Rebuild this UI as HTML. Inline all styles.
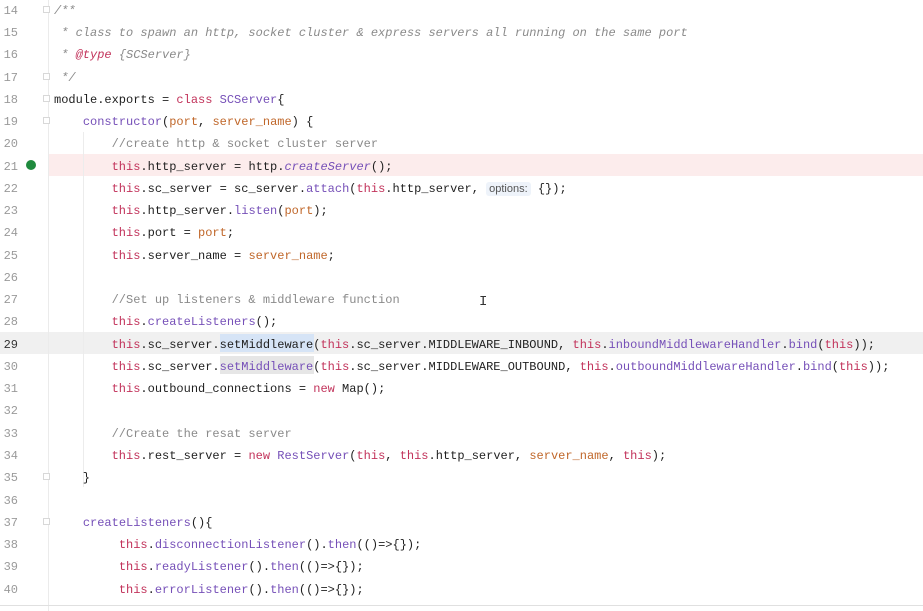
<!DOCTYPE html>
<html><head><meta charset="utf-8"><style>
body{margin:0;width:923px;height:611px;background:#fff;overflow:hidden;position:relative;font-family:"Liberation Mono",monospace;font-size:12px;}
.ln{position:absolute;left:0;width:18px;text-align:right;color:#9a9a9a;margin-top:2px;}
.c{position:absolute;left:54px;white-space:pre;color:#1f1f1f;margin-top:2px;}
.k{color:#c2335b}.f{color:#7650b8}.p{color:#c0672a}.cm{color:#8a8a8a}.ci{color:#8a8a8a;font-style:italic}.t{color:#c2335b;font-style:italic}
.hint{font-family:"Liberation Sans",sans-serif;font-size:11px;color:#555;background:#eef3fa;border-radius:3px;padding:1px 3px;}
.fold{position:absolute;left:43px;width:7px;height:7px;border:1px solid #d8d8d8;background:#fff;box-sizing:border-box}
</style></head><body>
<div style="position:absolute;left:48px;top:154px;width:875px;height:22px;background:#fcecec"></div>
<div style="position:absolute;left:0;top:332px;width:923px;height:22px;background:#f0f0f0"></div>
<div style="position:absolute;left:48px;top:0;width:1px;height:611px;background:#ebebeb"></div>
<div style="position:absolute;left:83px;top:132px;width:1px;height:355px;background:#ececec"></div>
<div style="position:absolute;left:0;top:605px;width:923px;height:1px;background:#e0e0e0"></div>
<div class="fold" style="top:6px"></div>
<div class="fold" style="top:73px"></div>
<div class="fold" style="top:95px"></div>
<div class="fold" style="top:117px"></div>
<div class="fold" style="top:473px"></div>
<div class="fold" style="top:518px"></div>
<div style="position:absolute;left:26px;top:160px;width:10px;height:10px;border-radius:50%;background:#1f8a3e"></div>
<div style="position:absolute;left:220px;top:334px;width:94px;height:18px;background:#d6e4f6"></div>
<div style="position:absolute;left:220px;top:356px;width:94px;height:18px;background:#e6e6e6"></div>
<div style="position:absolute;left:479px;top:294px;color:#333;font-size:14px">I</div>
<div class="ln" style="top:2px">14</div><div class="c ci" style="top:2px">/**</div>
<div class="ln" style="top:24px">15</div><div class="c ci" style="top:24px"> * class to spawn an http, socket cluster &amp; express servers all running on the same port</div>
<div class="ln" style="top:46px">16</div><div class="c ci" style="top:46px"> * <span class="t">@type</span> {SCServer}</div>
<div class="ln" style="top:69px">17</div><div class="c ci" style="top:69px"> */</div>
<div class="ln" style="top:91px">18</div><div class="c" style="top:91px">module.exports = <span class="k">class</span> <span class="f">SCServer</span>{</div>
<div class="ln" style="top:113px">19</div><div class="c" style="top:113px">    <span class="f">constructor</span>(<span class="p">port</span>, <span class="p">server_name</span>) {</div>
<div class="ln" style="top:135px">20</div><div class="c cm" style="top:135px">        //create http &amp; socket cluster server</div>
<div class="ln" style="top:158px">21</div><div class="c" style="top:158px">        <span class="k">this</span>.http_server = http.<span class="f" style="font-style:italic">createServer</span>();</div>
<div class="ln" style="top:180px">22</div><div class="c" style="top:180px">        <span class="k">this</span>.sc_server = sc_server.<span class="f">attach</span>(<span class="k">this</span>.http_server, <span class="hint">options:</span> {});</div>
<div class="ln" style="top:202px">23</div><div class="c" style="top:202px">        <span class="k">this</span>.http_server.<span class="f">listen</span>(<span class="p">port</span>);</div>
<div class="ln" style="top:224px">24</div><div class="c" style="top:224px">        <span class="k">this</span>.port = <span class="p">port</span>;</div>
<div class="ln" style="top:247px">25</div><div class="c" style="top:247px">        <span class="k">this</span>.server_name = <span class="p">server_name</span>;</div>
<div class="ln" style="top:269px">26</div>
<div class="ln" style="top:291px">27</div><div class="c cm" style="top:291px">        //Set up listeners &amp; middleware function</div>
<div class="ln" style="top:313px">28</div><div class="c" style="top:313px">        <span class="k">this</span>.<span class="f">createListeners</span>();</div>
<div class="ln" style="top:336px;color:#333">29</div><div class="c" style="top:336px">        <span class="k">this</span>.sc_server.setMiddleware(<span class="k">this</span>.sc_server.MIDDLEWARE_INBOUND, <span class="k">this</span>.<span class="f">inboundMiddlewareHandler</span>.<span class="f">bind</span>(<span class="k">this</span>));</div>
<div class="ln" style="top:358px">30</div><div class="c" style="top:358px">        <span class="k">this</span>.sc_server.<span class="f">setMiddleware</span>(<span class="k">this</span>.sc_server.MIDDLEWARE_OUTBOUND, <span class="k">this</span>.<span class="f">outboundMiddlewareHandler</span>.<span class="f">bind</span>(<span class="k">this</span>));</div>
<div class="ln" style="top:380px">31</div><div class="c" style="top:380px">        <span class="k">this</span>.outbound_connections = <span class="k">new</span> Map();</div>
<div class="ln" style="top:402px">32</div>
<div class="ln" style="top:425px">33</div><div class="c cm" style="top:425px">        //Create the resat server</div>
<div class="ln" style="top:447px">34</div><div class="c" style="top:447px">        <span class="k">this</span>.rest_server = <span class="k">new</span> <span class="f">RestServer</span>(<span class="k">this</span>, <span class="k">this</span>.http_server, <span class="p">server_name</span>, <span class="k">this</span>);</div>
<div class="ln" style="top:469px">35</div><div class="c" style="top:469px">    }</div>
<div class="ln" style="top:492px">36</div>
<div class="ln" style="top:514px">37</div><div class="c" style="top:514px">    <span class="f">createListeners</span>(){</div>
<div class="ln" style="top:536px">38</div><div class="c" style="top:536px">         <span class="k">this</span>.<span class="f">disconnectionListener</span>().<span class="f">then</span>(()=&gt;{});</div>
<div class="ln" style="top:558px">39</div><div class="c" style="top:558px">         <span class="k">this</span>.<span class="f">readyListener</span>().<span class="f">then</span>(()=&gt;{});</div>
<div class="ln" style="top:581px">40</div><div class="c" style="top:581px">         <span class="k">this</span>.<span class="f">errorListener</span>().<span class="f">then</span>(()=&gt;{});</div>
</body></html>
